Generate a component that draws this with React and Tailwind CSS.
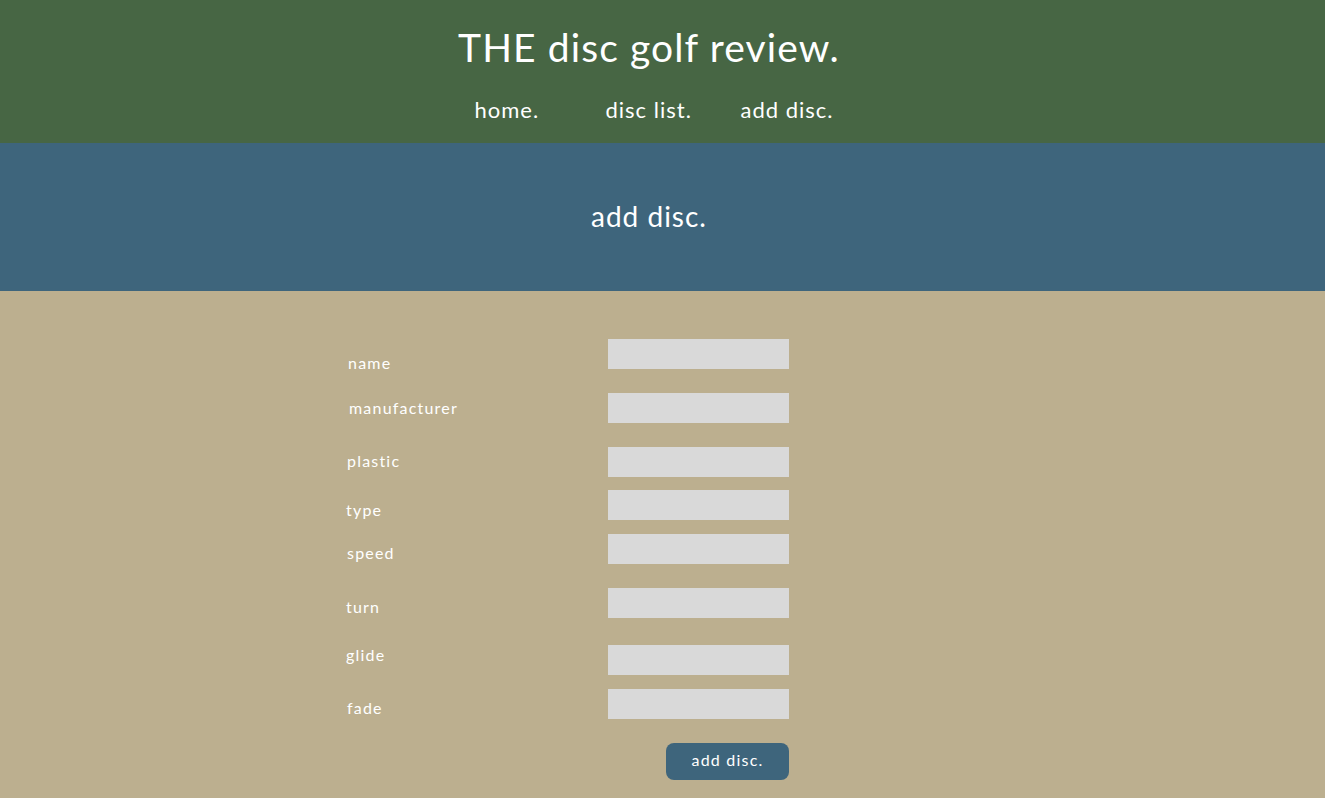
import React from "react";

const fields = [
  { label: "name", row: "h-[54px]", lbl: "mt-[14px] ml-[2px]" },
  { label: "manufacturer", row: "h-[54px]", lbl: "mt-[5px] ml-[3px]" },
  { label: "plastic", row: "h-[43px]", lbl: "mt-[4px] ml-[1px]" },
  { label: "type", row: "h-[44px]", lbl: "mt-[10px]" },
  { label: "speed", row: "h-[54px]", lbl: "mt-[9px] ml-[1px]" },
  { label: "turn", row: "h-[57px]", lbl: "mt-[9px]" },
  { label: "glide", row: "h-[44px]", lbl: "mt-0" },
  { label: "fade", row: "h-[54px]", lbl: "mt-[9px] ml-[1px]" },
];

const App = () => {
  return (
    <div className="min-h-screen bg-[#bcaf8f] text-white font-['Lato',sans-serif]">
      {/* Header */}
      <header className="bg-[#476644] h-[143px] flex flex-col items-center">
        <h1 className="mt-[24px] text-[39px] leading-[46px] tracking-[1.1px] ml-[-27px]">
          THE disc golf review.
        </h1>
        <nav className="mt-[27px] flex text-[22px] leading-[26px] tracking-[1px] ml-[-17px]">
          <a className="w-[131px]">home.</a>
          <a className="w-[135px]">disc list.</a>
          <a>add disc.</a>
        </nav>
      </header>

      {/* Page title */}
      <section className="bg-[#3e657c] h-[148px] flex items-center justify-center">
        <h2 className="text-[28px] leading-[32px] tracking-[1px] ml-[-27px] mt-[-2px]">
          add disc.
        </h2>
      </section>

      {/* Form */}
      <main className="pt-[48px] pl-[346px]">
        <form className="w-[443px]">
          {fields.map((f) => (
            <div key={f.label} className={`flex justify-between ${f.row}`}>
              <label className={`text-[16px] leading-[20px] tracking-[1.2px] ${f.lbl}`}>
                {f.label}
              </label>
              <input
                type="text"
                className="w-[181px] h-[30px] bg-[#d9d9d9] outline-none"
              />
            </div>
          ))}
          <div className="flex justify-end">
            <button
              type="button"
              className="w-[123px] h-[37px] pb-[3px] rounded-[8px] bg-[#3e657c] text-[16px] tracking-[1.2px]"
            >
              add disc.
            </button>
          </div>
        </form>
      </main>
    </div>
  );
};

export default App;
